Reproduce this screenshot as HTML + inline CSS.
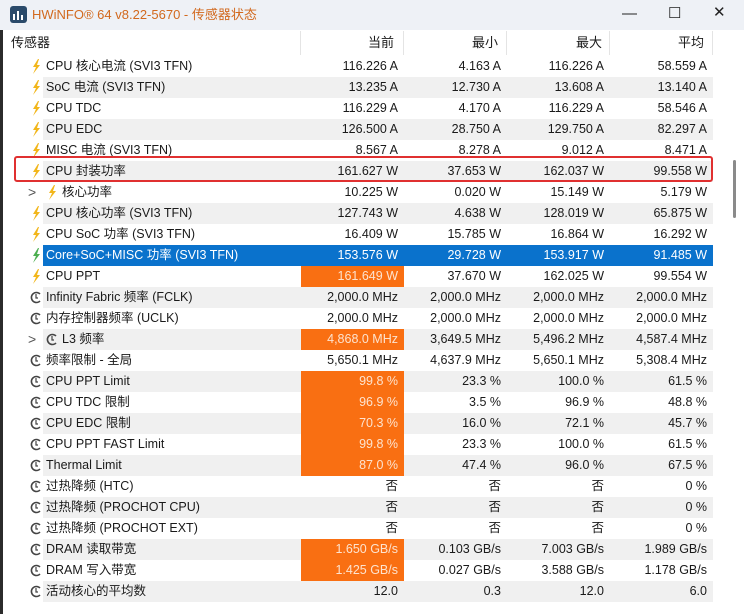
<!DOCTYPE html>
<html><head><meta charset="utf-8"><style>
*{margin:0;padding:0;box-sizing:border-box}
body{width:744px;height:614px;overflow:hidden;background:#fff;font-family:"Liberation Sans","Noto Sans CJK SC",sans-serif;font-size:12.5px;color:#1a1a1a;position:relative}
.title{position:absolute;left:0;top:0;width:744px;height:30px;background:#eef1f6}
.title .t{position:absolute;left:32px;top:0;line-height:30px;color:#d2691e;font-size:13px}
.logo{position:absolute;left:10px;top:6px;width:17px;height:17px;background:#2a4a6a;border-radius:3px}
.logo i{position:absolute;bottom:3px;width:2px;background:#fff}
.wb{position:absolute;top:5px;font-size:15px;color:#222}
.lb{position:absolute;left:0;top:30px;width:3px;height:584px;background:#2b2b2b}
.hdr{position:absolute;top:30px;height:26px;left:0;width:714px}
.hdr div{position:absolute;top:0;line-height:26px;font-size:13px}
.sep{position:absolute;top:31px;width:1px;height:24px;background:#e4e4e4}
.row{position:absolute;left:0;width:714px;height:21px;line-height:21px}
.row.g .bg{background:#f0f0f0}
.bg{position:absolute;left:43px;right:1px;top:0;bottom:0}
.row.sel .bg{background:#0a72cc}
.row.sel{color:#fff}
.row .n{position:absolute;left:46px;top:0;height:21px;line-height:21px;white-space:nowrap}
.c{position:absolute;top:0;height:21px;line-height:21px;width:103px;text-align:right;padding-right:6px}
.c1{left:301px}.c2{left:404px}.c3{left:507px}.c4{left:610px}
.or{background:#f96f12;color:#fde3cf}
.ic{position:absolute;left:29px;top:2px;width:14px;height:17px}
.th{position:absolute;left:733px;top:160px;width:3px;height:58px;background:#8a8a8a;border-radius:2px}
.red{position:absolute;left:14px;top:156px;width:699px;height:26px;border:2px solid #e03030;border-radius:3px}
.chev{position:absolute;left:28px;top:0;line-height:21px;font-size:14px;color:#555}
</style></head><body>
<div class="title"><div class="logo"><i style="left:3px;height:6px"></i><i style="left:7px;height:9px"></i><i style="left:11px;height:5px"></i></div>
<div class="t">HWiNFO® 64 v8.22-5670 - 传感器状态</div>
<div class="wb" style="left:622px">—</div><div class="wb" style="left:668px;top:4px">☐</div><div class="wb" style="left:713px;top:3px">✕</div></div>
<div class="lb"></div>
<div class="hdr">
<div style="left:11px">传感器</div>
<div style="left:368px">当前</div><div style="left:472px">最小</div><div style="left:576px">最大</div><div style="left:678px">平均</div>
</div>
<div class="sep" style="left:300px"></div><div class="sep" style="left:403px"></div><div class="sep" style="left:506px"></div><div class="sep" style="left:609px"></div><div class="sep" style="left:712px"></div>
<div id="rows"></div>
<div class="th"></div>
<div class="red"></div>
<script>
const L='<svg class="ic" viewBox="0 0 14 17"><path d="M9 1 L4 9 L7 9 L4 16 L11 7 L8 7 L10 1Z" fill="#f2b61a"/></svg>';
const LG='<svg class="ic" viewBox="0 0 14 17"><path d="M9 1 L4 9 L7 9 L4 16 L11 7 L8 7 L10 1Z" fill="#4caf50"/></svg>';
const C='<svg class="ic" viewBox="0 0 14 17"><path d="M11 5 A5 5 0 1 0 11 12" fill="none" stroke="#444" stroke-width="1.6"/><path d="M7 5 V9 L9 9" fill="none" stroke="#444" stroke-width="1.2"/></svg>';
const R=[
[L,'CPU 核心电流 (SVI3 TFN)','116.226 A','4.163 A','116.226 A','58.559 A'],
[L,'SoC 电流 (SVI3 TFN)','13.235 A','12.730 A','13.608 A','13.140 A'],
[L,'CPU TDC','116.229 A','4.170 A','116.229 A','58.546 A'],
[L,'CPU EDC','126.500 A','28.750 A','129.750 A','82.297 A'],
[L,'MISC 电流 (SVI3 TFN)','8.567 A','8.278 A','9.012 A','8.471 A'],
[L,'CPU 封装功率','161.627 W','37.653 W','162.037 W','99.558 W'],
[L,'核心功率','10.225 W','0.020 W','15.149 W','5.179 W',1],
[L,'CPU 核心功率 (SVI3 TFN)','127.743 W','4.638 W','128.019 W','65.875 W'],
[L,'CPU SoC 功率 (SVI3 TFN)','16.409 W','15.785 W','16.864 W','16.292 W'],
[LG,'Core+SoC+MISC 功率 (SVI3 TFN)','153.576 W','29.728 W','153.917 W','91.485 W',0,0,1],
[L,'CPU PPT','161.649 W','37.670 W','162.025 W','99.554 W',0,1],
[C,'Infinity Fabric 频率 (FCLK)','2,000.0 MHz','2,000.0 MHz','2,000.0 MHz','2,000.0 MHz'],
[C,'内存控制器频率 (UCLK)','2,000.0 MHz','2,000.0 MHz','2,000.0 MHz','2,000.0 MHz'],
[C,'L3 频率','4,868.0 MHz','3,649.5 MHz','5,496.2 MHz','4,587.4 MHz',1,1],
[C,'频率限制 - 全局','5,650.1 MHz','4,637.9 MHz','5,650.1 MHz','5,308.4 MHz'],
[C,'CPU PPT Limit','99.8 %','23.3 %','100.0 %','61.5 %',0,1],
[C,'CPU TDC 限制','96.9 %','3.5 %','96.9 %','48.8 %',0,1],
[C,'CPU EDC 限制','70.3 %','16.0 %','72.1 %','45.7 %',0,1],
[C,'CPU PPT FAST Limit','99.8 %','23.3 %','100.0 %','61.5 %',0,1],
[C,'Thermal Limit','87.0 %','47.4 %','96.0 %','67.5 %',0,1],
[C,'过热降频 (HTC)','否','否','否','0 %'],
[C,'过热降频 (PROCHOT CPU)','否','否','否','0 %'],
[C,'过热降频 (PROCHOT EXT)','否','否','否','0 %'],
[C,'DRAM 读取带宽','1.650 GB/s','0.103 GB/s','7.003 GB/s','1.989 GB/s',0,1],
[C,'DRAM 写入带宽','1.425 GB/s','0.027 GB/s','3.588 GB/s','1.178 GB/s',0,1],
[C,'活动核心的平均数','12.0','0.3','12.0','6.0']];
let h='';
R.forEach((r,i)=>{
 const sub=r[6];
 let ic=r[0];
 if(sub) ic=ic.replace('class="ic"','class="ic" style="left:45px"');
 h+=`<div class="row ${i%2?'g':''} ${r[8]?'sel':''}" style="top:${56+21*i}px"><div class="bg"></div>${sub?'<div class="chev">&gt;</div>':''}${ic}<div class="n" style="${sub?'left:62px':''}">${r[1]}</div><div class="c c1 ${r[7]?'or':''}">${r[2]}</div><div class="c c2">${r[3]}</div><div class="c c3">${r[4]}</div><div class="c c4">${r[5]}</div></div>`;
});
document.getElementById('rows').innerHTML=h;
</script>
</body></html>
